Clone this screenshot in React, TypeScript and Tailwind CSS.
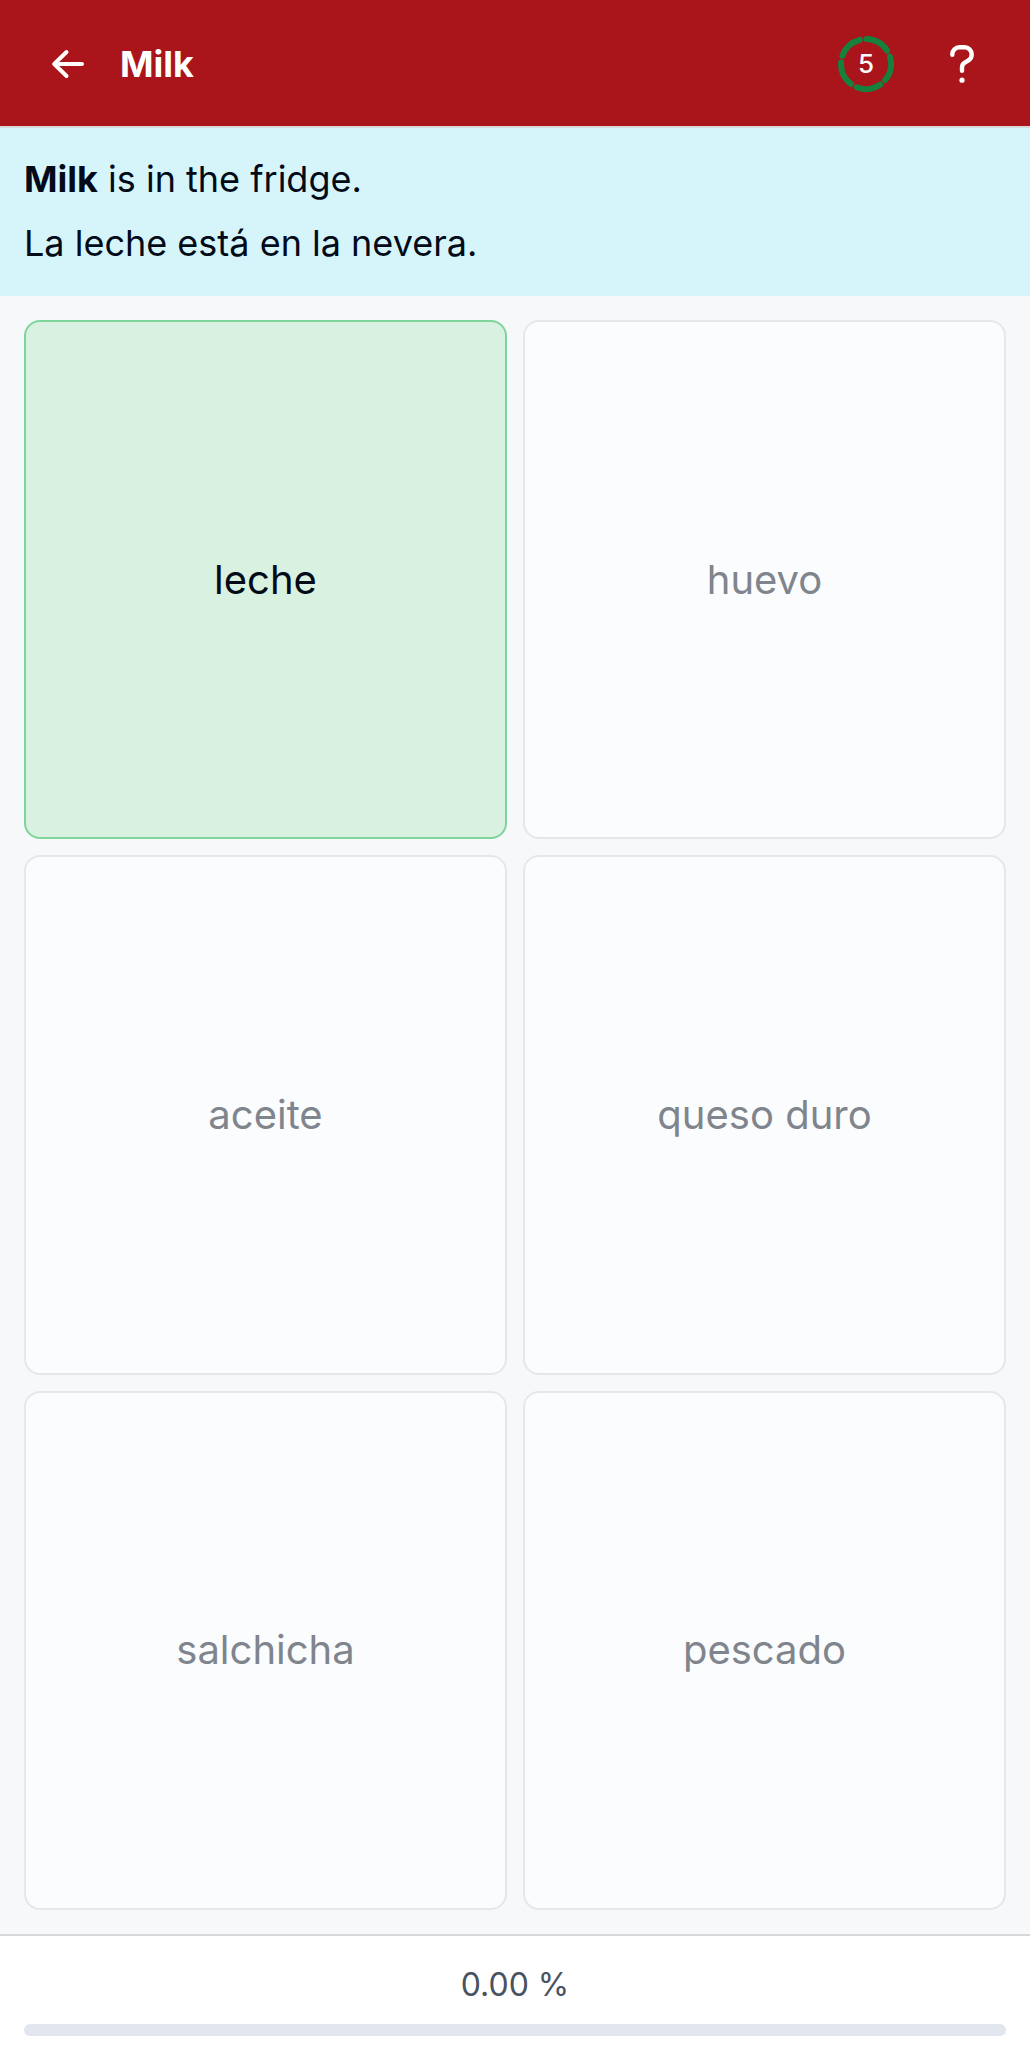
import { useState } from "react";

interface Choice {
  id: number;
  label: string;
}

const CHOICES: Choice[] = [
  { id: 1, label: "leche" },
  { id: 2, label: "huevo" },
  { id: 3, label: "aceite" },
  { id: 4, label: "queso duro" },
  { id: 5, label: "salchicha" },
  { id: 6, label: "pescado" },
];

const CORRECT_ID = 1;
const SEGMENTS = 5;

function BackIcon() {
  return (
    <svg width="36" height="36" viewBox="0 0 36 36" fill="none" stroke="currentColor" strokeWidth="4" strokeLinecap="round" strokeLinejoin="round" aria-hidden="true">
      <path d="M16.5 6 4.2 18l12.3 12M4.5 18H32" />
    </svg>
  );
}

function HelpIcon() {
  return (
    <svg width="36" height="40" viewBox="0 0 36 40" fill="none" aria-hidden="true">
      <path
        d="M8.3 10.8v-.5c0-4 3.2-7 7.2-7h5c4 0 7.2 3.2 7.2 7.2 0 2.6-1.4 4.9-3.6 6.2l-3.3 2c-1.7 1-2.8 2.9-2.8 4.9v3.2"
        stroke="currentColor"
        strokeWidth="4.4"
        strokeLinecap="round"
        strokeLinejoin="round"
      />
      <circle cx="18" cy="36.2" r="2.6" fill="currentColor" />
    </svg>
  );
}

function StepRing({ count }: { count: number }) {
  return (
    <div className="grid h-14 w-14 place-items-center">
      <svg className="col-start-1 row-start-1 h-14 w-14" viewBox="0 0 56 56" fill="none" aria-hidden="true">
        {Array.from({ length: SEGMENTS }, (_, i) => (
          <circle
            key={i}
            cx="28"
            cy="28"
            r="25"
            pathLength="360"
            stroke="#16803d"
            strokeWidth="6"
            strokeLinecap="round"
            strokeDasharray="56.5 303.5"
            transform={`rotate(${i * 72 - 89} 28 28)`}
          />
        ))}
      </svg>
      <span className="col-start-1 row-start-1 text-[26px] leading-none font-medium">{count}</span>
    </div>
  );
}

export default function App() {
  const [answered, setAnswered] = useState<number | null>(CORRECT_ID);
  const progress = 0;

  return (
    <div className="flex min-h-screen flex-col bg-[#f6f8fa] font-['Inter',sans-serif] text-[#030a18]">
      <header className="flex h-32 items-center border-b-2 border-[#d6d8da] bg-[#a9151a] px-8 pt-0.5 text-white">
        <button aria-label="Back" className="flex h-20 w-18 items-center justify-center">
          <BackIcon />
        </button>
        <h1 className="ml-4 flex-1 text-[36px] leading-[54px] font-bold">Milk</h1>
        <StepRing count={5} />
        <button aria-label="Help" className="ml-8 flex h-20 w-18 items-center justify-center">
          <HelpIcon />
        </button>
      </header>

      <section className="bg-[#d6f5fb] px-6 pt-[19px] pb-[21px] text-[36px] leading-[64px]">
        <p>
          <strong className="font-bold">Milk</strong> is in the fridge.
        </p>
        <p lang="es">La leche está en la nevera.</p>
      </section>

      <main className="grid flex-1 auto-rows-fr grid-cols-2 gap-4 p-6">
        {CHOICES.map((choice) => (
          <button
            key={choice.id}
            lang="es"
            onClick={() => setAnswered(choice.id)}
            className={`rounded-2xl border-2 text-[40px] leading-[60px] ${
              answered === choice.id
                ? "border-[#7fd49b] bg-[#d9f1e0]"
                : "border-[#e6e7e9] bg-[#fbfcfe] text-[#80858d]"
            }`}
          >
            {choice.label}
          </button>
        ))}
      </main>

      <footer className="border-t-2 border-[#d6d8da] bg-white px-6 py-6">
        <p className="text-center text-[32px] leading-[50px] text-[#4a5160]">{progress.toFixed(2)} %</p>
        <div
          role="progressbar"
          aria-label="Progress"
          aria-valuenow={progress}
          className="mt-[14px] h-3 overflow-hidden rounded-full bg-[#e2e6ee]"
        >
          <div className="h-full bg-[#16803d]" style={{ width: `${progress}%` }} />
        </div>
      </footer>
    </div>
  );
}
